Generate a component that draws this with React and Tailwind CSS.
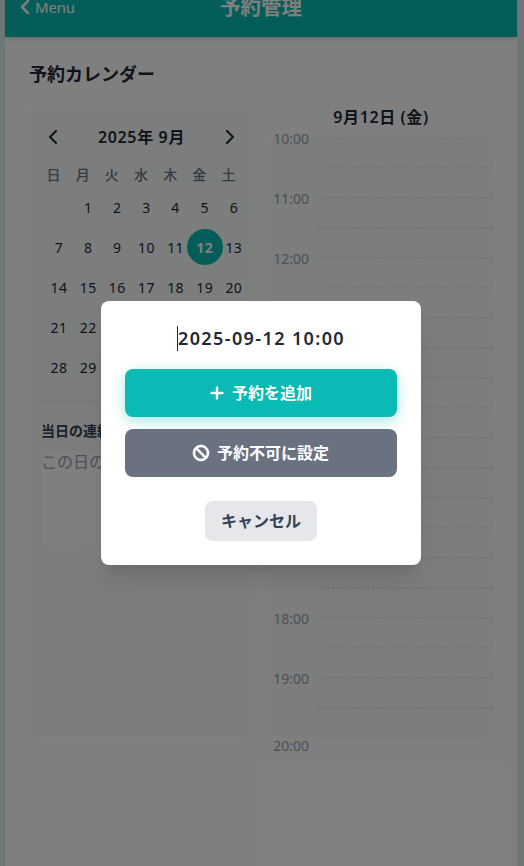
import { FaPlus, FaBan, FaChevronLeft, FaChevronRight } from 'react-icons/fa6';

const weekdays = ['日', '月', '火', '水', '木', '金', '土'];
const days = [null, ...Array.from({ length: 30 }, (_, i) => i + 1)];
const slots = Array.from({ length: 20 }, (_, i) => i);

function MonthPanel() {
  return (
    <section className="w-[224px] h-[632px] shrink-0 rounded-lg bg-[#f9fbfa] p-3">
      <div className="flex h-10 items-center justify-between px-[7px]">
        <FaChevronLeft className="ml-px h-4 w-[10px] text-gray-800" />
        <h3 className="text-[16px] font-semibold leading-6 tracking-[0.65px] text-gray-800 whitespace-nowrap">2025年 9月</h3>
        <FaChevronRight className="h-4 w-[10px] text-gray-800" />
      </div>
      <div className="-ml-[2px] grid w-[204px] grid-cols-7 pt-2 text-center text-[14px] font-medium leading-5 text-gray-500">
        {weekdays.map((d) => <span key={d}>{d}</span>)}
      </div>
      <div className="grid w-[204px] grid-cols-7 pt-0.5 text-[14px] tracking-[0.4px] text-gray-800">
        {days.map((d, i) => (
          <span key={i} className="flex h-10 w-9 items-center justify-center">
            {d === 12 ? (
              <span className="flex size-9 shrink-0 items-center justify-center rounded-full bg-[#0abab5] font-bold text-white">12</span>
            ) : d}
          </span>
        ))}
      </div>
      <div className="mt-[14px] border-t border-gray-200 pt-[19px]">
        <h4 className="text-[14px] font-semibold leading-5 text-gray-700 whitespace-nowrap">当日の連絡事項</h4>
        <div className="mt-2 h-[98px] overflow-hidden rounded-md border border-gray-100 bg-white text-[16px] leading-6 text-gray-400 whitespace-nowrap">
          <span className="-ml-px">この日の連絡事項</span>
        </div>
      </div>
    </section>
  );
}

function DayPanel() {
  return (
    <section className="w-[224px] shrink-0">
      <h3 className="h-8 text-center text-[16px] font-semibold leading-6 tracking-[0.6px] text-gray-800">9月12日 (金)</h3>
      <div className="h-[600px] rounded-lg bg-[#f9fbfa]">
        {slots.map((i) => (
          <div key={i} className="flex h-[30px]">
            <span className="w-10 shrink-0 -mt-[8px] text-right text-[14px] leading-5 text-gray-400">
              {i % 2 === 0 ? `${10 + i / 2}:00` : ''}
            </span>
            <span className="ml-2 flex-1 border-t border-dashed border-gray-200">
              {i > 0 && <span className="block border-t border-dotted border-gray-200" />}
            </span>
          </div>
        ))}
        <div className="flex">
          <span className="-mt-px w-10 shrink-0 text-right text-[14px] leading-5 text-gray-400">20:00</span>
          <span className="ml-2 mt-px flex-1 border-t border-dotted border-gray-200" />
        </div>
      </div>
    </section>
  );
}

export default function App() {
  return (
    <div className="relative h-[866px] w-[524px] overflow-hidden bg-[#dcefed] font-['Noto_Sans','Noto_Sans_CJK_JP',sans-serif]">
      <div className="ml-[5px] flex h-[866px] w-[512px] flex-col bg-white">
        <header className="-mt-6 grid h-[61px] shrink-0 grid-cols-3 items-center bg-[#0abab5] px-4 pt-px text-white shadow-md">
          <span className="flex items-center gap-1 text-[15px] tracking-[-0.2px]">
            <FaChevronLeft className="h-4 w-[10px]" stroke="currentColor" strokeWidth="24" />Menu
          </span>
          <h1 className="text-center text-[20.5px] font-bold leading-7">予約管理</h1>
        </header>
        <main className="px-6 pt-[23px]">
          <h2 className="text-[18px] font-semibold leading-7 text-gray-800">予約カレンダー</h2>
          <div className="mt-[17px] flex gap-4">
            <MonthPanel />
            <DayPanel />
          </div>
        </main>
      </div>
      <div className="absolute inset-0 bg-black/50">
        <div className="ml-[101px] mt-[301px] flex h-[264px] w-[320px] flex-col items-center rounded-lg bg-white p-6 shadow-xl">
          <h3 className="mb-[2px] mt-px h-[25px] border-l border-gray-800 text-[18px] font-semibold leading-[24px] tracking-[1.4px] text-gray-800 whitespace-nowrap">
            2025-09-12 10:00
          </h3>
          <button className="mt-4 flex h-12 w-full shrink-0 items-center justify-center gap-[7px] rounded-lg bg-[#0abab5] pr-px text-[16px] font-bold text-white shadow-[0_4px_14px_rgba(10,186,181,0.35)]">
            <FaPlus className="size-4" stroke="currentColor" strokeWidth="12" />予約を追加
          </button>
          <button className="mt-3 flex h-12 w-full shrink-0 items-center justify-center gap-2 rounded-lg bg-gray-500 text-[16px] font-bold text-white">
            <FaBan className="size-4 overflow-visible" stroke="currentColor" strokeWidth="20" />予約不可に設定
          </button>
          <button className="mt-6 h-10 w-28 shrink-0 rounded-lg bg-gray-200 text-[16px] font-semibold text-gray-700">キャンセル</button>
        </div>
      </div>
    </div>
  );
}
